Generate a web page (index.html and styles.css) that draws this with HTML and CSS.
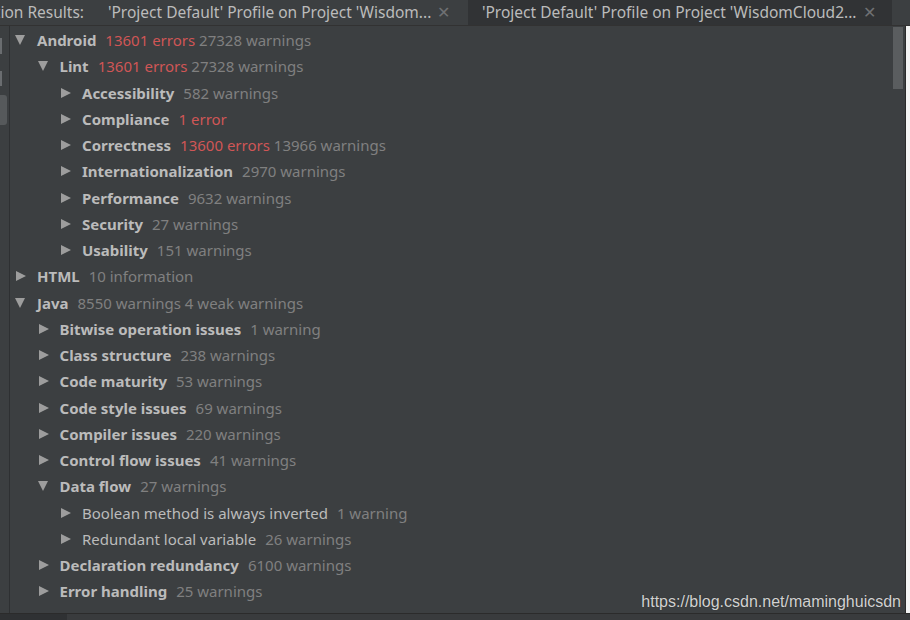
FILE: index.html
```html
<!DOCTYPE html>
<html lang="en">
<head>
    <meta charset="UTF-8">
    <title>Inspection Results</title>
    <link rel="stylesheet" href="styles.css">
</head>
<body>
<div class="window">
    <div class="tabs">
        <div class="title"><span>Inspection Results:</span></div>
        <div class="tab">'Project Default' Profile on Project 'Wisdom... <span class="close">&#x2715;</span></div>
        <div class="tab dark">'Project Default' Profile on Project 'WisdomCloud2... <span class="close">&#x2715;</span></div>
        <div class="tab-fill"></div>
    </div>
    <div class="main">
        <div class="side">
            <div class="mark m1"></div>
            <div class="mark m2"></div>
            <div class="mark m3"></div>
        </div>
        <div class="tree">
            <ul class="root">
                <li><div class="row"><span class="arrow open"></span><b>Android</b><span class="err">13601 errors</span>&nbsp;<span class="warn">27328 warnings</span></div>
                    <ul>
                        <li><div class="row"><span class="arrow open"></span><b>Lint</b><span class="err">13601 errors</span>&nbsp;<span class="warn">27328 warnings</span></div>
                            <ul>
                                <li><div class="row"><span class="arrow"></span><b>Accessibility</b><span class="warn">582 warnings</span></div></li>
                                <li><div class="row"><span class="arrow"></span><b>Compliance</b><span class="err">1 error</span></div></li>
                                <li><div class="row"><span class="arrow"></span><b>Correctness</b><span class="err">13600 errors</span>&nbsp;<span class="warn">13966 warnings</span></div></li>
                                <li><div class="row"><span class="arrow"></span><b>Internationalization</b><span class="warn">2970 warnings</span></div></li>
                                <li><div class="row"><span class="arrow"></span><b>Performance</b><span class="warn">9632 warnings</span></div></li>
                                <li><div class="row"><span class="arrow"></span><b>Security</b><span class="warn">27 warnings</span></div></li>
                                <li><div class="row"><span class="arrow"></span><b>Usability</b><span class="warn">151 warnings</span></div></li>
                            </ul>
                        </li>
                    </ul>
                </li>
                <li><div class="row"><span class="arrow"></span><b>HTML</b><span class="warn">10 information</span></div></li>
                <li><div class="row"><span class="arrow open"></span><b>Java</b><span class="warn">8550 warnings 4 weak warnings</span></div>
                    <ul>
                        <li><div class="row"><span class="arrow"></span><b>Bitwise operation issues</b><span class="warn">1 warning</span></div></li>
                        <li><div class="row"><span class="arrow"></span><b>Class structure</b><span class="warn">238 warnings</span></div></li>
                        <li><div class="row"><span class="arrow"></span><b>Code maturity</b><span class="warn">53 warnings</span></div></li>
                        <li><div class="row"><span class="arrow"></span><b>Code style issues</b><span class="warn">69 warnings</span></div></li>
                        <li><div class="row"><span class="arrow"></span><b>Compiler issues</b><span class="warn">220 warnings</span></div></li>
                        <li><div class="row"><span class="arrow"></span><b>Control flow issues</b><span class="warn">41 warnings</span></div></li>
                        <li><div class="row"><span class="arrow open"></span><b>Data flow</b><span class="warn">27 warnings</span></div>
                            <ul>
                                <li><div class="row"><span class="arrow"></span><span class="leaf">Boolean method is always inverted</span><span class="warn">1 warning</span></div></li>
                                <li><div class="row"><span class="arrow"></span><span class="leaf">Redundant local variable</span><span class="warn">26 warnings</span></div></li>
                            </ul>
                        </li>
                        <li><div class="row"><span class="arrow"></span><b>Declaration redundancy</b><span class="warn">6100 warnings</span></div></li>
                        <li><div class="row"><span class="arrow"></span><b>Error handling</b><span class="warn">25 warnings</span></div></li>
                        <li><div class="row"><span class="arrow open"></span><b>Imports</b><span class="warn">669 warnings</span></div></li>
                    </ul>
                </li>
            </ul>
        </div>
        <div class="scroll"><div class="thumb"></div></div>
        <div class="edge"></div>
    </div>
    <div class="footer"><div class="foot-left"></div></div>
    <div class="watermark">https://blog.csdn.net/maminghuicsdn</div>
</div>
</body>
</html>
```

FILE: styles.css
```css
body{
    margin: 0;
    background-color: #3c3f41;
    font-family: "Noto Sans", "Open Sans", sans-serif;
    font-size: 15px;
    color: #bbbbbb;
}
.window{
    position: relative;
    width: 910px;
    height: 620px;
    display: flex;
    flex-direction: column;
    overflow: hidden;
}
.tabs{
    display: flex;
    height: 25px;
    border-bottom: 1px solid #323232;
    background-color: #3c3f41;
    line-height: 24px;
    font-size: 15.5px;
    white-space: nowrap;
}
.title{
    width: 95px;
    display: flex;
    justify-content: flex-end;
    overflow: hidden;
}
.title span{
    margin-right: 11px;
}
.tab{
    width: 360px;
    padding-left: 13px;
    overflow: hidden;
}
.tab.dark{
    width: 410px;
    padding-left: 14px;
    background-color: #313335;
}
.close{
    color: #6f7173;
    font-size: 16px;
    margin-left: 2px;
}
.tab-fill{
    flex: 1;
}
.main{
    flex: 1;
    display: flex;
    min-height: 0;
}
.side{
    position: relative;
    width: 9px;
    border-right: 1px solid #2e3032;
}
.mark{
    position: absolute;
    left: 0;
    background-color: #6a6d70;
}
.m1{
    top: 12px;
    width: 2px;
    height: 16px;
}
.m2{
    top: 45px;
    width: 2px;
    height: 15px;
}
.m3{
    top: 69px;
    width: 7px;
    height: 30px;
    background-color: #56595b;
    border-radius: 0 3px 3px 0;
}
.tree{
    flex: 1;
    overflow: hidden;
    padding-top: 1px;
}
ul{
    list-style: none;
    margin: 0;
    padding: 0 0 0 22.5px;
}
ul.root{
    padding-left: 5px;
}
.row{
    height: 26.25px;
    display: flex;
    align-items: center;
    white-space: nowrap;
}
.arrow{
    width: 22px;
    height: 11px;
    flex: none;
    display: flex;
    align-items: center;
}
.arrow::before{
    content: "";
    margin-left: 1px;
    border-left: 10px solid #9d9d9d;
    border-top: 5.5px solid transparent;
    border-bottom: 5.5px solid transparent;
}
.arrow.open::before{
    margin-left: 0;
    border-left: 5.5px solid transparent;
    border-right: 5.5px solid transparent;
    border-top: 10px solid #9d9d9d;
    border-bottom: 0;
}
.row b{
    color: #bbbbbb;
    margin-right: 9px;
}
.leaf{
    color: #bbbbbb;
    margin-right: 9px;
}
.err{
    color: #d05656;
}
.warn{
    color: #808080;
}
.scroll{
    width: 13px;
    padding-top: 1px;
}
.thumb{
    margin-left: 1px;
    width: 10px;
    height: 62px;
    background-color: #5a5d5f;
}
.edge{
    width: 4px;
    background-color: #f4f4f4;
    border-left: 1px solid #2b2b2b;
}
.footer{
    height: 6px;
    border-top: 1px solid #2b2b2b;
    background-color: #393b3d;
}
.foot-left{
    width: 67px;
    height: 100%;
    background-color: #2f3133;
}
.watermark{
    position: absolute;
    right: 9px;
    bottom: 9px;
    font-family: "Liberation Sans", Arial, sans-serif;
    font-size: 16px;
    color: #d2d2d2;
    text-shadow: 0 0 1px #222222;
}
```
